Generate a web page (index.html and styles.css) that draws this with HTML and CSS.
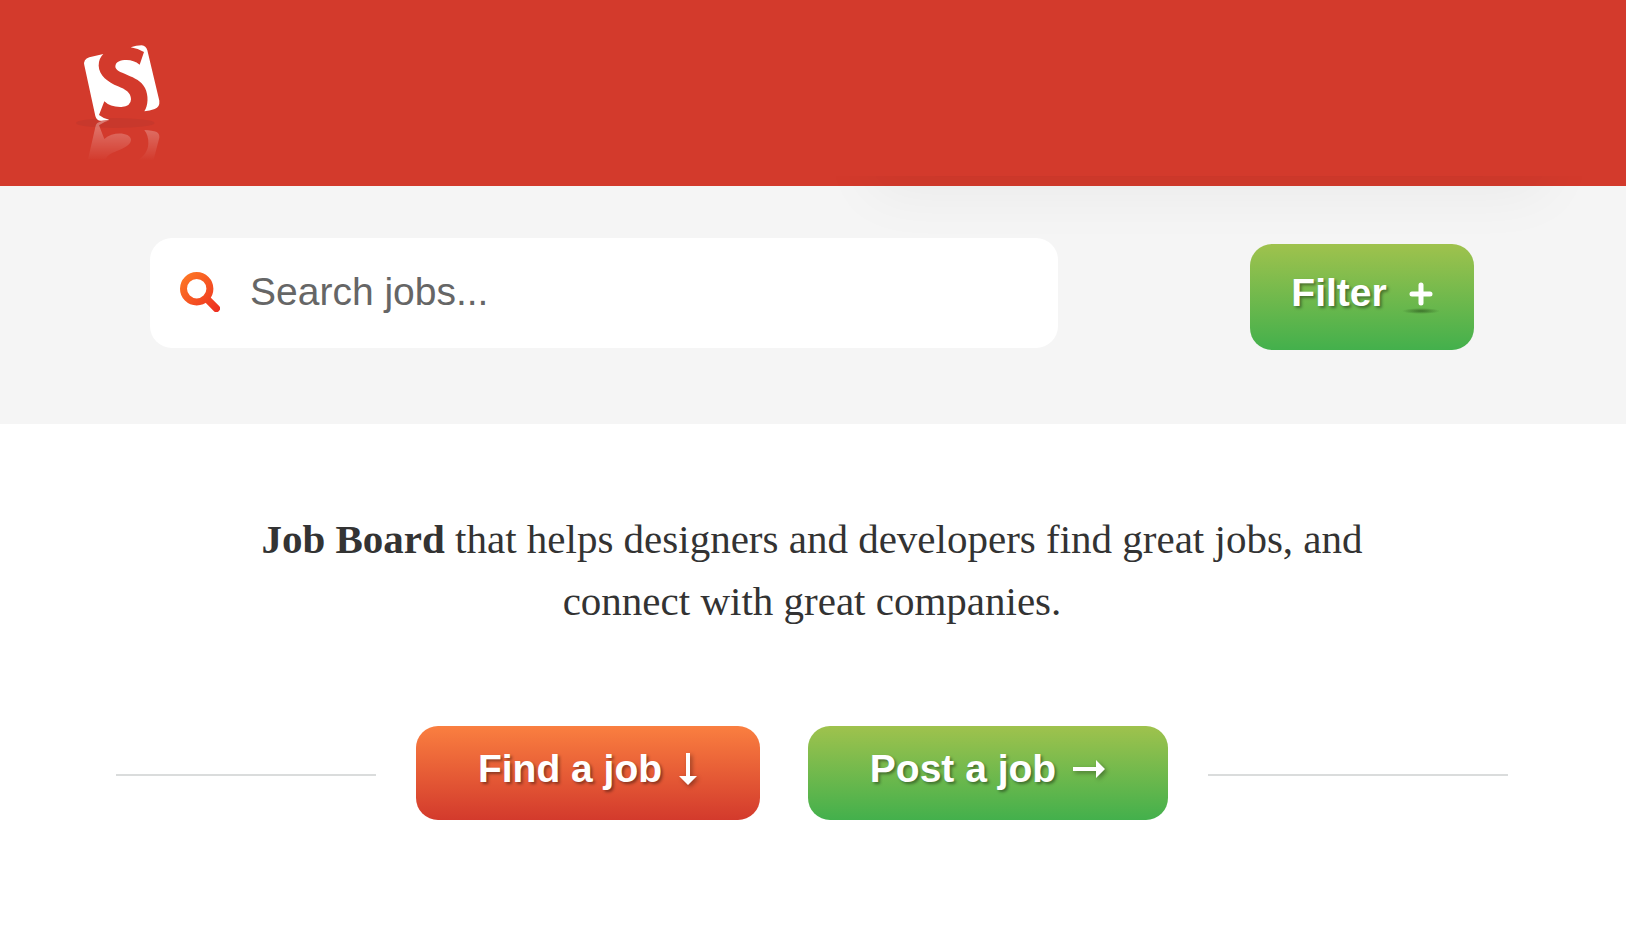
FILE: index.html
```html
<!DOCTYPE html>
<html lang="en">
<head>
<meta charset="utf-8">
<title>Job Board</title>
<link rel="stylesheet" href="styles.css">
</head>
<body>
<header class="header">
  <a class="logo" href="#" aria-label="Home">
    <svg class="logo-image" viewBox="0 0 360 450" aria-hidden="true">
      <defs>
        <linearGradient id="fade" x1="0" y1="270" x2="0" y2="392" gradientUnits="userSpaceOnUse">
          <stop offset="0" stop-color="#fff" stop-opacity=".34"/>
          <stop offset="1" stop-color="#fff" stop-opacity="0"/>
        </linearGradient>
      </defs>
      <ellipse cx="166" cy="279" rx="118" ry="15" fill="#c8382c"/>
      <path fill="#fff" d="M130 72L88 82Q69 88 73 106L106 258Q110 273 124 272Q137 271 148 269Q132 267 117 255L133 214Q151 232 184 231Q213 229 213 208C213 188 196 178 174 169C144 156 117 137 116 107Q116 85 130 72Z"/>
      <path fill="#fff" d="M212 52Q229 46 245 46Q258 47 262 61L298 212Q300 231 284 237Q269 243 253 244C265 226 266 196 255 174C245 154 224 144 202 135C180 126 166 121 166 109C167 95 181 90 200 90Q221 90 239 104L252 66Q234 55 212 52Z"/>
      <path fill="url(#fade)" d="M148 271Q126 269 112 279C105 286 105 300 102 309L84 388H136C145 372 157 369 178 360C202 350 213 340 213 329C211 307 159 303 133 327L117 286Q130 276 148 271Z"/>
      <path fill="url(#fade)" d="M253 300Q277 301 290 306Q299 311 298 323L280 392H232C251 379 264 363 265 341Q266 317 253 300Z"/>
    </svg>
  </a>
</header>
<main>
  <form class="search">
    <div class="panel-shadow"></div>
    <label class="search-box">
      <svg class="search-icon" viewBox="0 0 40 40" aria-hidden="true">
        <defs><linearGradient id="glass" x1="0" y1="0" x2="40" y2="40" gradientUnits="userSpaceOnUse"><stop stop-color="#ff7d24"/><stop offset="1" stop-color="#ec2c20"/></linearGradient></defs>
        <g fill="none" stroke="url(#glass)"><circle cx="16.700" cy="16.700" r="13.200" stroke-width="7"/><path d="M26.500 26.500L36.300 36.300" stroke-width="7.400" stroke-linecap="round"/></g>
      </svg>
      <input class="search-input" type="search" placeholder="Search jobs..." aria-label="Search jobs">
    </label>
    <button class="button green filter" type="button">Filter
      <svg class="plus" viewBox="0 0 40 34" aria-hidden="true">
        <defs><radialGradient id="floor"><stop stop-color="#1d3c10" stop-opacity=".55"/><stop offset="1" stop-color="#1d3c10" stop-opacity="0"/></radialGradient></defs>
        <ellipse cx="20" cy="31" rx="19" ry="3" fill="url(#floor)"/>
        <path d="M20 5V23M11 14H29" stroke="#fff" stroke-width="5" stroke-linecap="round"/>
      </svg>
    </button>
  </form>
  <section class="intro">
    <p class="tagline"><strong>Job Board</strong> that helps designers and developers find great jobs, and connect with great companies.</p>
    <div class="actions">
      <a class="button orange" href="#jobs">Find a job
        <svg class="arrow down" viewBox="0 0 20 34" aria-hidden="true"><path fill="#fff" d="M8 1H12V24H19L10 33L1 24H8Z"/></svg>
      </a>
      <a class="button green" href="#post">Post a job
        <svg class="arrow right" viewBox="0 0 34 20" aria-hidden="true"><path fill="#fff" d="M1 8H24V1L33 10L24 19V12H1Z"/></svg>
      </a>
    </div>
  </section>
</main>
</body>
</html>
```
FILE: styles.css
```css
* { box-sizing: border-box; }
body {
  margin: 0;
  background: #fff;
  color: #333;
  font-family: "Liberation Sans", Arial, sans-serif;
}
.header {
  padding: 30px 60px 6px;
  background: #d33a2c;
}
.logo { display: block; width: 120px; }
.logo-image { display: block; width: 120px; height: 150px; }
.search {
  position: relative;
  display: flex;
  align-items: flex-start;
  justify-content: space-between;
  gap: 40px;
  padding: 52px 152px 74px 150px;
  background: #f5f5f5;
}
.panel-shadow {
  position: absolute;
  top: -10px;
  left: 45%;
  right: 0;
  height: 90px;
  overflow: hidden;
  pointer-events: none;
}
.panel-shadow::before {
  content: "";
  position: absolute;
  top: -100px;
  left: 140px;
  right: 80px;
  height: 100px;
  box-shadow: 0 16px 60px rgba(0, 0, 0, .05);
}
.search-box {
  display: flex;
  align-items: center;
  gap: 30px;
  flex: 0 1 908px;
  height: 110px;
  padding: 0 30px 2px;
  border-radius: 22px;
  background: #fff;
}
.search-icon { flex: none; width: 40px; height: 40px; }
.search-input {
  flex: 1;
  min-width: 0;
  padding: 0;
  border: 0;
  outline: 0;
  background: none;
  color: #666;
  font: 39px/50px "Liberation Sans", Arial, sans-serif;
}
.search-input::placeholder { color: #666; opacity: 1; }
.button {
  display: flex;
  align-items: center;
  justify-content: center;
  flex: none;
  height: 94px;
  padding: 0 0 8px;
  border: 0;
  border-radius: 22px;
  color: #fff;
  font: bold 39px/50px "Liberation Sans", Arial, sans-serif;
  text-decoration: none;
  text-shadow: 2px 2px 3px rgba(0, 0, 0, .4);
  white-space: nowrap;
}
.green { width: 360px; background: linear-gradient(#9fc24d, #43b04c); }
.orange { width: 344px; background: linear-gradient(#fa7f40, #d33a2c); }
.filter { width: 224px; height: 106px; margin-top: 6px; padding: 0 0 8px 8px; gap: 14px; }
.plus { width: 40px; height: 34px; margin-top: 8px; }
.arrow { margin-left: 16px; filter: drop-shadow(2px 2px 2px rgba(0, 0, 0, .35)); }
.down { width: 20px; height: 34px; }
.right { width: 34px; height: 20px; }
.intro { padding: 84px 118px 80px 116px; }
.tagline {
  max-width: 1180px;
  margin: 0 auto 94px;
  font: 41px/62px "Liberation Serif", "Times New Roman", serif;
  text-align: center;
}
.actions {
  display: flex;
  align-items: center;
  gap: 48px;
}
.actions::before,
.actions::after {
  content: "";
  flex: 13 1 0;
  height: 2px;
  margin: 4px -8px 0 0;
  background: #dadcdc;
}
.actions::after { flex-grow: 15; margin: 4px 0 0 -8px; }
```
